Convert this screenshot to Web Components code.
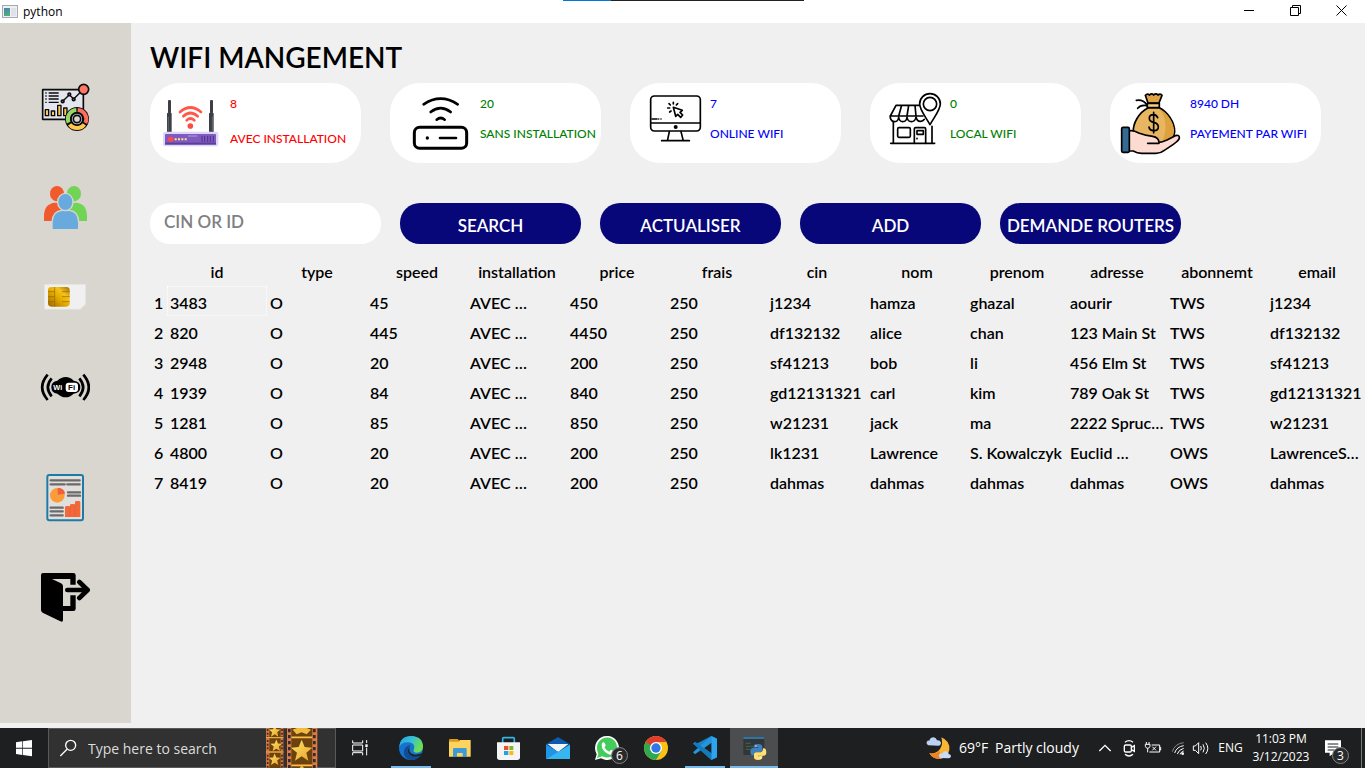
<!DOCTYPE html>
<html lang="fr">
<head>
<meta charset="utf-8">
<title>python</title>
<style>
  html, body { margin: 0; height: 100%; }
  body { background: #f0f0f0; color: #000; font-family: Lato, "Open Sans", sans-serif; }
</style>
</head>
<body>
<wifi-desktop></wifi-desktop>

<template id="t-desktop">
  <style>
    :host { display: flex; flex-direction: column; min-height: 100vh; }
    .body { flex: 1; display: flex; padding-bottom: 5px; }
    main { flex: 1; min-width: 0; padding-left: 19px; }
    h1 { margin: 16px 0 8px; font-size: 28px; line-height: 36px; font-weight: 600; }
    .cards { display: grid; grid-template-columns: repeat(5, 1fr); gap: 29px; margin-right: 44px; }
    form { display: grid; grid-template-columns: 231fr repeat(4, 181fr); gap: 19px; margin: 40px 184px 0 0; }
    input { box-sizing: border-box; width: 100%; height: 41px; border: 0; border-radius: 20px; outline: 0; background: #fff; padding: 0 14px 4px; font: 600 17px Lato, sans-serif; }
    input::placeholder { color: #808080; opacity: 1; }
    data-table { margin-top: 12px; }
  </style>
  <title-bar></title-bar>
  <div class="body">
    <side-nav></side-nav>
    <main>
      <h1>WIFI MANGEMENT</h1>
      <section class="cards">
        <stat-card value="8" label="AVEC INSTALLATION" style="--ink:#ff0000;--gap:21px">
          <svg viewBox="450 249 240 240" aria-hidden="true">
            <g fill="#3c3f45"><rect x="504" y="300" width="9" height="40" rx="3"/><rect x="501" y="338" width="14" height="60" rx="3"/><rect x="630" y="300" width="9" height="40" rx="3"/><rect x="627" y="338" width="14" height="60" rx="3"/></g>
            <g stroke="#777b82" stroke-width="2"><path d="M505 350V392M637 350V392"/></g>
            <g fill="none" stroke="#ff584b" stroke-width="8" stroke-linecap="round"><path d="M540 336Q571 309 603 336M550 349Q571 329 593 349M560 361Q571 350 583 361"/></g>
            <circle cx="571" cy="378" r="8.500" fill="#ff4c43"/>
            <rect x="489" y="395" width="166" height="44" rx="8" fill="#dcd6fb"/>
            <rect x="495" y="402" width="153" height="31" rx="2" fill="#7f5abf"/>
            <rect x="495" y="428" width="153" height="6" fill="#5e3e9b"/>
            <path d="M564 408H592" stroke="#b69de0" stroke-width="3"/>
            <circle cx="512" cy="418" r="8" fill="#ff4a45"/>
            <path d="M524 418H560" stroke="#ffe889" stroke-width="6" stroke-dasharray="6 4"/>
            <path d="M606 408V426M614 408V426M623 408V426M631 408V426M640 408V426" stroke="#503088" stroke-width="3"/>
          </svg>
        </stat-card>
        <stat-card value="20" label="SANS INSTALLATION" style="--ink:#008000;--inset:10px">
          <svg viewBox="30 24 240 240" aria-hidden="true" fill="none" stroke="#000" stroke-linecap="round">
            <g stroke-width="8"><path d="M131 88Q182 54 233 88M152 111Q182 88 212 111M170 134Q182 124 194 134"/></g>
            <rect x="103" y="157" width="157" height="63" rx="16" stroke-width="9"/>
            <circle cx="142" cy="189" r="5" fill="#000" stroke="none"/><path d="M180 189H228" stroke-width="8"/>
          </svg>
        </stat-card>
        <stat-card value="7" label="ONLINE WIFI" style="--ink:#0000ff">
          <svg viewBox="750 24 240 240" aria-hidden="true" fill="none" stroke="#000" stroke-width="5" stroke-linecap="round">
            <rect x="812" y="63" width="149" height="105" rx="11"/><path d="M812 144H961M816 132H831M836 132H836M843 132H843M868 170L863 194M903 170L909 194M845 197H928"/>
            <circle cx="887" cy="156" r="6" fill="#000" stroke="none"/>
            <path d="M880 97L907 106L900 112L908 120L902 127L893 118L887 124Z" stroke-width="5" stroke-linejoin="round"/>
            <path d="M880 82V87M867 86L871 90M893 86L889 90M863 99H869M869 111L873 108"/>
          </svg>
        </stat-card>
        <stat-card value="0" label="LOCAL WIFI" style="--ink:#008000">
          <svg viewBox="510 24 240 240" aria-hidden="true" fill="none" stroke="#000" stroke-width="5" stroke-linecap="round" stroke-linejoin="round">
            <path d="M658 91H588L571 123H669M605 91L596 123M626 91L621 123M645 91L648 123"/>
            <path d="M571 123V129Q574 140 584 140Q595 140 596 126Q598 140 608 140Q620 140 621 126Q623 140 634 140Q646 140 648 126Q651 140 662 139Q669 139 673 133"/>
            <path d="M580 141V205M696 154V205M572 205H704"/>
            <rect x="593" y="158" width="38" height="29" rx="4"/><path d="M643 205V162Q643 158 647 158H673Q677 158 677 162V205"/><rect x="651" y="167" width="19" height="11"/><path d="M651 190V191"/>
            <path d="M690 149C676 124 659 104 659 87A31 31 0 0 1 721 87C721 104 704 124 690 149Z" fill="#fff"/><circle cx="690" cy="87" r="20"/>
          </svg>
        </stat-card>
        <stat-card value="8940 DH" label="PAYEMENT PAR WIFI" style="--ink:#0000ff">
          <svg viewBox="150 24 240 240" aria-hidden="true" stroke="#000" stroke-width="5" stroke-linejoin="round" stroke-linecap="round">
            <path d="M265 98C236 112 218 146 220 172Q222 204 252 204H312Q342 200 344 170C344 140 322 110 298 98Z" fill="#e8b662"/>
            <path d="M298 103C320 124 322 170 306 202H318Q340 196 342 168C341 140 322 114 298 103Z" fill="#dda23e" stroke="none"/>
            <path d="M264 84L256 61Q262 54 269 60Q275 53 281 60Q288 53 294 60Q301 54 306 61L297 84Z" fill="#dfa346"/>
            <path d="M262 85H298V98H262Z" fill="#f5d28a"/><path d="M261 89Q248 72 229 76M261 92Q242 88 233 100" fill="none"/>
            <path d="M293 128Q289 119 280 119Q268 119 268 130Q268 140 281 142Q295 145 295 156Q295 167 281 167Q269 167 267 156M281 112V173" fill="none" stroke-width="5"/>
            <path d="M206 168Q219 164 236 174Q254 181 278 184Q296 187 297 202Q306 202 321 195L346 182Q359 178 358 190Q356 197 340 208L313 226Q302 235 288 235H245Q231 235 220 228H206Z" fill="#fddbd1"/>
            <path d="M263 205H297" fill="none"/><rect x="185" y="157" width="23" height="75" rx="4" fill="#346a93"/>
          </svg>
        </stat-card>
      </section>
      <form onsubmit="return false">
        <input type="text" aria-label="CIN OR ID" placeholder="CIN OR ID">
        <pill-button>SEARCH</pill-button>
        <pill-button>ACTUALISER</pill-button>
        <pill-button>ADD</pill-button>
        <pill-button>DEMANDE ROUTERS</pill-button>
      </form>
      <data-table></data-table>
    </main>
  </div>
  <task-bar></task-bar>
</template>

<template id="t-title">
  <style>
    :host { display: flex; align-items: center; position: relative; height: 23px; padding-right: 1px; background: #fff; font: 12px/23px "Open Sans", "Noto Sans", sans-serif; }
    .ico { width: 16px; height: 14px; margin: 0 5px 0 2px; }
    .name { flex: 1; }
    button { width: 46px; height: 21px; margin-bottom: 2px; padding: 0; border: 0; background: none; display: grid; place-items: center; }
    .peek { position: absolute; top: 0; left: 50%; width: 241px; height: 1px; margin-left: -120px; background: linear-gradient(90deg, #0078d7 48px, #222 48px); }
    button svg { width: 11px; height: 11px; }
  </style>
  <svg class="ico" viewBox="0 0 16 14" aria-hidden="true"><defs><linearGradient id="g" x2="0.3" y2="1"><stop stop-color="#4a7fb5"/><stop offset="1" stop-color="#4fae7c"/></linearGradient></defs><rect x=".5" y=".5" width="15" height="12" fill="#eef0f2" stroke="#a5aab0"/><rect x="2" y="3" width="6" height="8" fill="url(#g)"/><rect x="9" y="3" width="5" height="8" fill="#dfe3e8"/></svg>
  <span class="name">python</span>
  <button aria-label="Minimize"><svg viewBox="0 0 11 11"><path d="M0 5.500H10" stroke="#000"/></svg></button>
  <button aria-label="Restore"><svg viewBox="0 0 11 11" fill="none" stroke="#000"><path d="M.5 2.500H8.500V10.500H.5ZM2.500 2.500V.5H10.500V8.500H8.500"/></svg></button>
  <button aria-label="Close"><svg viewBox="0 0 11 11"><path d="M.5 .5L10.500 10.500M10.500 .5L.5 10.500" stroke="#000"/></svg></button>
  <div class="peek"></div>
</template>

<template id="t-side">
  <style>
    :host { display: block; width: 131px; flex: none; background: #d9d6cf; }
    nav { display: grid; grid-template-rows: 100px 100px 80px 100px 120px 80px; padding: 34px 1px 0 0; }
    button { border: 0; background: none; padding: 0; display: grid; place-items: center; }
    svg { width: 50px; height: 50px; }
  </style>
  <nav>
    <button aria-label="Dashboard"><svg viewBox="30 36 150 150" stroke="#0b0b0b" stroke-width="5" stroke-linejoin="round">
      <rect x="38" y="59" width="122" height="89" fill="#e3e6ee"/>
      <path d="M46 69H50M46 78H50M46 87H50M46 97H50M56 69H86M56 78H86M56 87H86M56 97H86" stroke-width="4"/>
      <g fill="#ffc65a" stroke-width="4"><rect x="46" y="119" width="10" height="18"/><rect x="64" y="123" width="10" height="14"/><rect x="83" y="106" width="10" height="31"/><rect x="101" y="114" width="10" height="23"/></g>
      <path d="M98 94L118 74L131 87L155 63" fill="none" stroke-width="4"/>
      <g fill="#ff7765"><circle cx="98" cy="94" r="4"/><circle cx="118" cy="73" r="4"/><circle cx="131" cy="88" r="4"/><circle cx="161" cy="58" r="15"/></g>
      <circle cx="141" cy="147" r="36" fill="#0b0b0b" stroke="none"/>
      <g fill="none" stroke-width="12"><path d="M143 120A27 27 0 0 1 166 159" stroke="#ff6d5c"/><path d="M163 163A27 27 0 0 1 119 163" stroke="#ffc94f"/><path d="M116 158A27 27 0 0 1 139 120" stroke="#96d765"/></g>
      <circle cx="141" cy="147" r="18" fill="#dadde6"/><circle cx="141" cy="147" r="11" fill="#d9d6cf"/>
    </svg></button>
    <button aria-label="Clients"><svg viewBox="30 336 150 150">
      <ellipse cx="81" cy="371" rx="21" ry="23" fill="#f15a2c"/><path d="M42 453V440Q42 400 76 398Q100 398 108 420V453Z" fill="#f15a2c"/>
      <ellipse cx="132" cy="371" rx="21" ry="23" fill="#70d455"/><path d="M171 453V440Q171 400 137 398Q113 398 105 420V453Z" fill="#70d455"/>
      <g fill="#69aade" stroke="#d9d6cf" stroke-width="4"><path d="M66 479V456Q68 423 96 421H117Q145 423 146 456V479Z"/><ellipse cx="106" cy="396" rx="23" ry="26"/></g>
    </svg></button>
    <button aria-label="SIM"><svg viewBox="30 6 150 150">
      <defs><linearGradient id="au" x1="0" y1="1" x2="1" y2="0"><stop stop-color="#9c6500"/><stop offset=".5" stop-color="#e8b000"/><stop offset=".7" stop-color="#f2c21c"/><stop offset="1" stop-color="#a66c00"/></linearGradient></defs>
      <path d="M43 46Q43 43 46 43H164Q167 43 167 46V102L151 118H46Q43 118 43 115Z" fill="#f0f0f0" stroke="#e2e2e2" stroke-width="2"/>
      <rect x="54" y="51" width="65" height="59" rx="10" fill="url(#au)"/><path d="M54 65H74V51M54 80H74V65M54 95H74V80M74 95V110M119 65H96M119 80H96M119 95H96" stroke="#956300" stroke-width="2" fill="none"/>
    </svg></button>
    <button aria-label="Wifi"><svg viewBox="30 276 150 150">
      <g fill="none" stroke="#000" stroke-width="8"><path d="M53 314Q20 352 53 390M65 325Q42 352 65 379M160 314Q193 352 160 390M148 325Q171 352 148 379"/></g>
      <path d="M64 352Q64 334 82 332Q94 321 107 321Q121 321 131 332Q151 334 151 352Q151 369 131 371Q120 382 107 382Q94 382 82 371Q64 369 64 352Z" fill="#000"/>
      <rect x="107" y="338" width="37" height="28" rx="9" fill="#fff"/>
      <text x="70" y="360" font-family="Liberation Sans, sans-serif" font-weight="700" font-size="22" fill="#fff">Wi</text><text x="114" y="361" font-family="Liberation Sans, sans-serif" font-weight="700" font-size="24">Fi</text>
    </svg></button>
    <button aria-label="Rapport"><svg viewBox="30 36 150 150">
      <rect x="52" y="45" width="107" height="136" rx="6" fill="#e1dfdc" stroke="#1f7ba6" stroke-width="6"/>
      <path d="M62 61H149M62 73H104M112 73H149M114 97H150M114 107H150M62 143H98M62 154H98M62 166H98" stroke="#6a6a6a" stroke-width="7" stroke-linecap="round"/>
      <circle cx="82" cy="106" r="22" fill="#fc9b3a"/><path d="M83 104V83Q104 84 105 101Z" fill="#f2603b"/>
      <path d="M105 171V142Q105 138 109 138H116Q120 138 120 142V136Q120 132 124 132H131Q135 132 135 136V127Q135 123 139 123H147Q151 123 151 127V171Z" fill="#f2683a"/><path d="M120 138V170M135 132V170" stroke="#d95425" stroke-width="1"/>
    </svg></button>
    <button aria-label="Sortir"><svg viewBox="30 336 150 150">
      <path d="M33 345Q33 339 39 339H130Q137 339 137 346V374H121V357H66L93 370Q99 373 99 379V438H121V406H137V446Q137 453 130 453H99V480Q99 488 91 484L38 458Q33 455 33 450Z"/>
      <path d="M112 390H172M148 366L173 390L148 414" fill="none" stroke="#000" stroke-width="14" stroke-linecap="round" stroke-linejoin="round"/>
    </svg></button>
  </nav>
</template>

<template id="t-card">
  <style>
    :host { display: flex; height: 80px; border-radius: 30px; background: #fff; color: var(--ink); }
    ::slotted(svg) { width: 80px; height: 80px; flex: none; }
    dl { margin: 14px 0 0 var(--inset, 0); display: flex; flex-direction: column-reverse; justify-content: flex-end; gap: var(--gap, 16px); font-size: 12px; line-height: 14px; font-weight: 500; white-space: nowrap; }
    dd { margin: 0; }
  </style>
  <slot></slot>
  <dl><dt></dt><dd></dd></dl>
</template>

<template id="t-pill">
  <style>
    :host { display: block; }
    button { width: 100%; height: 41px; border: 0; border-radius: 20px; background: #07077a; color: #fff; font: 600 17px Lato, sans-serif; padding: 3px 0 0; white-space: nowrap; }
  </style>
  <button type="button"><slot></slot></button>
</template>

<template id="t-table">
  <style>
    :host { display: block; overflow: hidden; }
    table { width: calc(100% + 2px); table-layout: fixed; border-collapse: collapse; font-size: 16px; line-height: 26px; font-weight: 600; }
    col.n { width: 17px; }
    th, td { padding: 4px 0 0; font-weight: inherit; white-space: nowrap; text-align: left; }
    thead th { text-align: center; padding: 2px 0 0; line-height: 28px; }
    tbody th { padding-left: 4px; }
    td { padding-left: 3px; }
    td.focus { outline: 1px dotted #fff; outline-offset: -1px; }
  </style>
  <table><colgroup><col class="n"></colgroup><thead></thead><tbody></tbody></table>
</template>

<template id="t-task">
  <style>
    :host { display: flex; height: 40px; background: #1e1f20; color: #fff; font: 14px/20px "Open Sans", "Noto Sans", sans-serif; }
    button { position: relative; display: block; border: 0; padding: 0; margin: 0; background: none; color: inherit; font: inherit; height: 40px; flex: none; }
    svg { display: block; height: 40px; }
    .app { width: 48px; }
    .app svg { width: 48px; }
    .search { box-sizing: border-box; display: flex; align-items: center; width: 288px; height: 40px; border: 1px solid #5a5a5a; background: #313131; }
    .search .lens { width: 39px; height: 38px; }
    .search .film { width: 52px; height: 40px; margin-right: 17px; }
    .search input { flex: 1; min-width: 0; border: 0; padding: 2px 0 0; background: none; outline: 0; color: #fff; font: inherit; }
    .search input::placeholder { color: #dcdcdc; opacity: 1; }
    .apps { display: flex; gap: 1px; margin-left: 3px; }
    .open::after { content: ""; position: absolute; left: 4px; right: 4px; bottom: 0; height: 2px; background: #76b9ed; }
    .active { background: #4c4d4e; }
    .active::after { left: 0; right: 0; }
    .badge { position: absolute; box-sizing: border-box; width: 17px; height: 17px; border: 1px solid #858585; border-radius: 50%; background: #292a2b; font-size: 12px; line-height: 15px; text-align: center; right: 3px; bottom: 4px; }
    .tray { display: flex; margin-left: auto; }
    .weather { display: flex; align-items: center; width: 169px; white-space: nowrap; }
    .weather svg { width: 28px; height: 28px; margin-right: 5px; }
    .weather .deg { width: 36px; text-align: left; }
    .eng { width: 33px; font-size: 12px; text-align: center; }
    .clock { width: 68px; font-size: 12px; line-height: 18px; }
    .clock span { display: block; }
    .note { width: 46px; }
    .note .badge { right: 12px; bottom: 4px; }
    .peek { width: 4px; box-sizing: border-box; border-left: 1px solid #777; }
  </style>
  <button class="app" aria-label="Start"><svg viewBox="0 9 144 120" fill="#fff"><path d="M48 52L67 49V68H48ZM69 49L96 45V68H69ZM48 71H67V90L48 87ZM69 71H96V94L69 90Z"/></svg></button>
  <div class="search">
    <svg class="lens" viewBox="147 12 117 114" fill="none" stroke="#fff" stroke-width="4"><circle cx="212" cy="61" r="15"/><path d="M201 73L181 93"/></svg>
    <input type="text" aria-label="Search" placeholder="Type here to search">
    <svg class="film" viewBox="798 9 156 120" aria-hidden="true">
      <defs><linearGradient id="st" x2="1" y2="1"><stop stop-color="#ffe76a"/><stop offset="1" stop-color="#e9a12b"/></linearGradient><path id="star" d="M0-32L9-10L32-8L14 7L20 31L0 18L-20 31L-14 7L-32-8L-9-10Z" fill="url(#st)"/></defs>
      <rect x="798" y="9" width="52" height="120" fill="#d8793c"/><rect x="808" y="9" width="34" height="120" fill="#6c420d"/>
      <path d="M803 12V129M846 12V129" stroke="#3b2c36" stroke-width="5" stroke-dasharray="6 5"/>
      <path d="M798 38H850M798 81H850" stroke="#f0a843" stroke-width="4"/>
      <use href="#star" transform="translate(824 18) scale(.55)"/><use href="#star" transform="translate(829 61) scale(.55)"/><use href="#star" transform="translate(824 103) scale(.55)"/>
      <rect x="861" y="9" width="91" height="120" fill="#df7c3d"/><rect x="874" y="9" width="63" height="120" fill="#6c420d"/>
      <path d="M868 12V129M943 12V129" stroke="#2e2b3c" stroke-width="8" stroke-dasharray="10 8"/>
      <path d="M874 37H937M874 121H937" stroke="#ffbc4a" stroke-width="5"/>
      <use href="#star" x="905" y="76"/><path d="M878 14L891 9H920L933 14L920 28L905 22L890 28Z" fill="#f2bb40"/><path d="M899 129L905 121L912 129Z" fill="#f2bb40"/>
    </svg>
  </div>
  <button class="app" aria-label="Task View"><svg viewBox="1008 9 144 120" fill="none" stroke="#fff" stroke-width="3"><path d="M1058 46V54H1088V46M1058 91V83H1088V91M1058 60H1088V78H1058ZM1100 45V54M1100 68V91"/><rect x="1096" y="58" width="7" height="8" fill="#fff" stroke="none"/></svg></button>
  <div class="apps">
    <button class="app open" aria-label="Edge"><svg viewBox="21 9 144 120">
      <defs><linearGradient id="e1" x2="1" y2=".5"><stop stop-color="#2c9be6"/><stop offset=".5" stop-color="#35c1d4"/><stop offset="1" stop-color="#6fe04c"/></linearGradient></defs>
      <circle cx="93" cy="69" r="36" fill="#1474cf"/><path d="M58 66Q60 33 94 33Q129 35 129 66Q128 84 108 83Q97 81 102 72Q107 55 87 52Q65 50 58 66Z" fill="url(#e1)"/>
      <path d="M89 64Q80 73 88 86Q98 99 123 90Q110 106 92 105Q69 99 72 77Q75 62 93 59Z" fill="#124c93"/><path d="M90 66Q85 77 92 84Q102 94 126 85L123 91Q100 100 88 87Q79 75 90 66Z" fill="#1e1f20"/>
    </svg></button>
    <button class="app" aria-label="Explorer"><svg viewBox="168 9 144 120"><path d="M207 45Q207 42 210 42H233L238 47H270V60H207Z" fill="#d99b18"/><path d="M207 50H236L240 45H272V95H207Z" fill="#ffd45e"/><path d="M219 72Q219 69 222 69H257Q260 69 260 72V96H248V84H231V96H219Z" fill="#3c9ad9"/></svg></button>
    <button class="app" aria-label="Store"><svg viewBox="315 9 144 120"><path d="M368 55V41Q368 38 371 38H400Q403 38 403 41V55" fill="none" stroke="#34b5e8" stroke-width="5"/><path d="M351 52H420V97Q420 105 412 105H359Q351 105 351 97Z" fill="#f4f4f4"/><path d="M372 63H385V75H372Z" fill="#f04e27"/><path d="M388 63H400V75H388Z" fill="#7db829"/><path d="M372 78H385V90H372Z" fill="#1ca4e6"/><path d="M388 78H400V90H388Z" fill="#fcb813"/></svg></button>
    <button class="app" aria-label="Mail"><svg viewBox="462 9 144 120"><path d="M498 58L534 36L570 58V70H498Z" fill="#0c5cab"/><path d="M503 57H565L534 82Z" fill="#f3f6f9"/><path d="M498 59L570 102H498Z" fill="#1e8ee0"/><path d="M570 59L498 102H570Z" fill="#36b7f2"/><path d="M498 59L534 80L498 102Z" fill="#2095e5"/></svg></button>
    <button class="app" aria-label="WhatsApp"><svg viewBox="609 9 144 120"><path d="M645 105L650 88Q645 79 645 69A36 36 0 1 1 663 100Z" fill="#fff"/><path d="M651 99L655 87Q651 79 651 69A30 30 0 1 1 667 94Z" fill="#43cb5b"/><path d="M666 55Q670 49 674 54L677 61Q677 64 673 67Q678 77 688 80L692 75Q694 74 702 79Q702 87 692 89Q685 89 675 81Q662 68 666 55Z" fill="#fff"/></svg><span class="badge">6</span></button>
    <button class="app" aria-label="Chrome"><svg viewBox="756 9 144 120"><circle cx="828" cy="69" r="36" fill="#fbc116"/><path d="M828 69L797 51A36 36 0 0 1 859 51H828Z" fill="#e33b2e"/><path d="M797 51A36 36 0 0 0 828 105L844 78L828 69L812 78Z" fill="#2da94f"/><path d="M797 51H828V69H807Z" fill="#e33b2e"/><path d="M797 51L812 78L828 69Z" fill="#2da94f"/><circle cx="828" cy="69" r="18" fill="#fff"/><circle cx="828" cy="69" r="14" fill="#2f78e8"/></svg></button>
    <button class="app open" aria-label="VS Code"><svg viewBox="903 9 144 120"><path d="M994 33L1011 41V97L994 105L950 64L939 56L944 51L952 55Z" fill="#1b80c4"/><path d="M994 33V105L1011 97V41Z" fill="#2ba5ef"/><path d="M994 53V85L973 69Z" fill="#1e1f20"/><path d="M939 82L994 33V53L945 88Z" fill="#2196dc"/><path d="M939 56L945 51L994 85V105Z" fill="#1678bd"/></svg></button>
    <button class="app open active" aria-label="Python"><svg viewBox="1050 9 144 120"><rect x="1090" y="37" width="63" height="53" fill="#333638"/><path d="M1090 39H1153" stroke="#2b84bd" stroke-width="5"/><path d="M1097 55H1112M1097 64H1120M1097 73H1110" stroke="#3b603f" stroke-width="4"/>
      <path d="M1121 68V64Q1121 57 1134 57Q1147 57 1147 65V76Q1147 81 1141 81H1128Q1122 81 1122 91H1117Q1111 91 1111 79Q1111 69 1119 69H1134V67Z" fill="#3d82bd"/><path d="M1147 92V97Q1147 105 1134 105Q1122 105 1122 97V87Q1122 82 1128 82H1141Q1149 81 1149 70H1153Q1159 72 1159 81Q1159 92 1151 92H1134V94Z" fill="#ffe072"/><circle cx="1128" cy="63" r="2" fill="#fff"/><circle cx="1141" cy="99" r="2" fill="#fff"/></svg></button>
  </div>
  <div class="tray">
    <button class="weather"><svg viewBox="78 24 84 84"><path d="M124 34Q151 45 148 72Q144 95 119 99Q98 99 88 82Q108 85 120 69Q130 54 124 34Z" fill="#f9b536"/><path d="M88 82Q108 85 118 74L126 97Q102 104 88 82Z" fill="#ed8324"/><path d="M85 58Q78 55 80 48Q83 43 88 44Q91 34 101 34Q109 35 111 43Q121 42 123 50Q123 58 115 59Z" fill="#bcd2f4"/><path d="M120 96Q114 91 118 84Q122 80 127 83Q130 75 138 76Q145 78 146 84Q153 85 153 91Q152 97 146 97Z" fill="#c8daf6"/></svg><span class="deg">69°F</span><span>Partly cloudy</span></button>
    <button aria-label="Hidden icons"><svg width="23" viewBox="585 9 69 120" fill="none" stroke="#fff" stroke-width="4"><path d="M598 78L615 61L632 78"/></svg></button>
    <button aria-label="Meet now"><svg width="23" viewBox="654 9 69 120" fill="none" stroke="#fff" stroke-width="4"><rect x="673" y="60" width="21" height="21" rx="4"/><path d="M694 67L703 62V79L694 74M675 52Q687 42 699 52M675 88Q687 98 699 88"/></svg></button>
    <button aria-label="Battery"><svg width="25" viewBox="723 9 75 120" fill="none" stroke="#fff" stroke-width="3"><path d="M755 60H779V81H748M779 67H782V75H779M739 51V58M747 51V58M736 58H750V64Q748 70 743 70Q738 70 736 64ZM743 70V82M757 65L768 76M768 65L757 76"/></svg></button>
    <button aria-label="Network"><svg width="23" viewBox="798 9 69 120" fill="none" stroke-width="3"><path d="M817 80Q824 56 851 53" stroke="#888"/><path d="M824 84Q830 65 851 62M832 87Q836 74 851 70M840 88Q843 81 851 78" stroke="#fff"/><circle cx="848" cy="86" r="4" fill="#fff"/></svg></button>
    <button aria-label="Volume"><svg width="25" viewBox="867 9 75 120" fill="none" stroke="#fff" stroke-width="3"><path d="M880 63H886L896 53V86L886 76H880ZM902 63Q906 70 902 76M909 58Q917 70 909 82M917 53Q930 70 917 87"/></svg></button>
    <button class="eng">ENG</button>
    <button class="clock"><span>11:03 PM</span><span>3/12/2023</span></button>
    <button class="note" aria-label="Notifications"><svg width="46" viewBox="1245 9 138 120"><path d="M1275 46H1323V83H1303L1289 94V83H1275Z" fill="#fff"/><path d="M1283 57H1315M1283 66H1315M1283 75H1304" stroke="#1e1f20" stroke-width="3"/></svg><span class="badge">3</span></button>
    <div class="peek"></div>
  </div>
</template>

<script>
  class Base extends HTMLElement {
    constructor() {
      super();
      this.attachShadow({ mode: "open" }).append(
        document.getElementById(this.constructor.tpl).content.cloneNode(true));
    }
  }

  class TitleBar extends Base { static tpl = "t-title"; }
  class SideNav extends Base { static tpl = "t-side"; }
  class PillButton extends Base { static tpl = "t-pill"; }
  class TaskBar extends Base { static tpl = "t-task"; }
  class WifiDesktop extends Base { static tpl = "t-desktop"; }

  class StatCard extends Base {
    static tpl = "t-card";
    connectedCallback() {
      this.shadowRoot.querySelector("dd").textContent = this.getAttribute("value");
      this.shadowRoot.querySelector("dt").textContent = this.getAttribute("label");
    }
  }

  const COLUMNS = ["id", "type", "speed", "installation", "price", "frais", "cin", "nom", "prenom", "adresse", "abonnemt", "email"];
  const ROWS = [
    ["3483", "O", "45", "AVEC …", "450", "250", "j1234", "hamza", "ghazal", "aourir", "TWS", "j1234"],
    ["820", "O", "445", "AVEC …", "4450", "250", "df132132", "alice", "chan", "123 Main St", "TWS", "df132132"],
    ["2948", "O", "20", "AVEC …", "200", "250", "sf41213", "bob", "li", "456 Elm St", "TWS", "sf41213"],
    ["1939", "O", "84", "AVEC …", "840", "250", "gd12131321", "carl", "kim", "789 Oak St", "TWS", "gd12131321"],
    ["1281", "O", "85", "AVEC …", "850", "250", "w21231", "jack", "ma", "2222 Spruc…", "TWS", "w21231"],
    ["4800", "O", "20", "AVEC …", "200", "250", "lk1231", "Lawrence", "S. Kowalczyk", "Euclid …", "OWS", "LawrenceS…"],
    ["8419", "O", "20", "AVEC …", "200", "250", "dahmas", "dahmas", "dahmas", "dahmas", "OWS", "dahmas"]
  ];

  class DataTable extends Base {
    static tpl = "t-table";
    connectedCallback() {
      const root = this.shadowRoot;
      const group = root.querySelector("colgroup");
      COLUMNS.forEach(() => group.append(document.createElement("col")));
      const head = root.querySelector("thead").insertRow();
      head.append(document.createElement("td"));
      COLUMNS.forEach(name => {
        const th = document.createElement("th");
        th.scope = "col";
        th.textContent = name;
        head.append(th);
      });
      ROWS.forEach((cells, i) => {
        const tr = root.querySelector("tbody").insertRow();
        const th = document.createElement("th");
        th.scope = "row";
        th.textContent = i + 1;
        tr.append(th);
        cells.forEach((text, j) => {
          const td = tr.insertCell();
          td.textContent = text;
          if (i === 0 && j === 0) td.className = "focus";
        });
      });
    }
  }

  customElements.define("title-bar", TitleBar);
  customElements.define("side-nav", SideNav);
  customElements.define("stat-card", StatCard);
  customElements.define("pill-button", PillButton);
  customElements.define("data-table", DataTable);
  customElements.define("task-bar", TaskBar);
  customElements.define("wifi-desktop", WifiDesktop);
</script>
</body>
</html>
